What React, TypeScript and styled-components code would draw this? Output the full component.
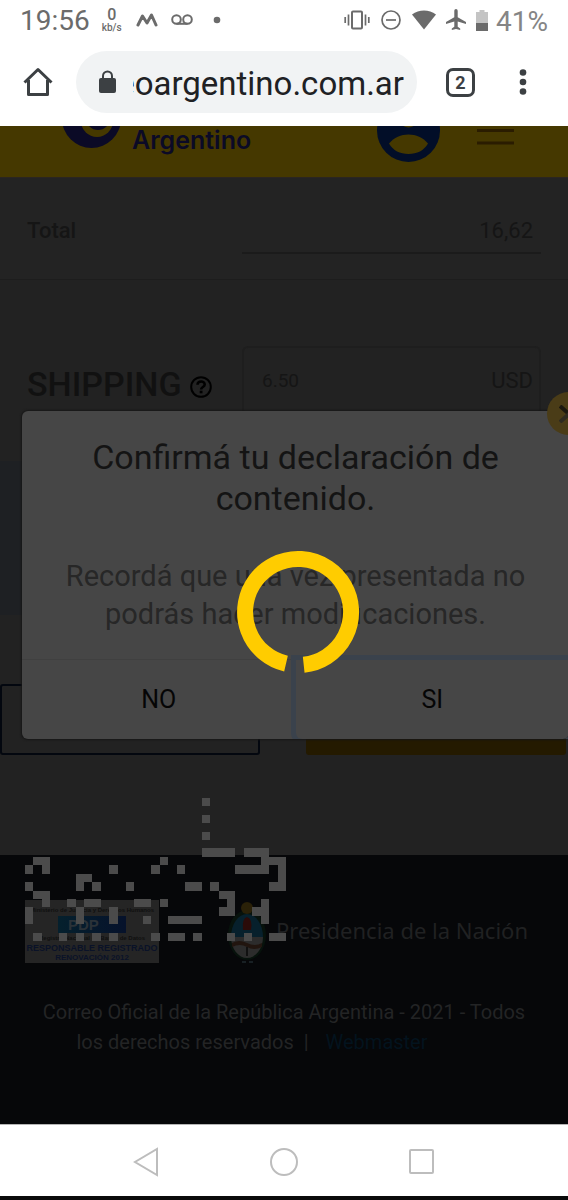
import React from "react";
import styled, { createGlobalStyle } from "styled-components";

const Global = createGlobalStyle`
  *, *::before, *::after { box-sizing: border-box; }
  body { margin: 0; background: #fff; font-family: Roboto, "Liberation Sans", sans-serif; }
  button, input { font: inherit; color: inherit; background: none; border: 0; padding: 0; margin: 0; outline: 0; }
  button { display: flex; align-items: center; justify-content: center; }
  svg { display: block; flex: none; }
  h1, p { margin: 0; }
`;

const Screen = styled.div`
  display: flex;
  flex-direction: column;
  min-height: 100vh;
`;

const StatusBar = styled.div`
  display: flex;
  align-items: center;
  height: 40px;
  padding: 0 20px;
  color: #6b6b6b;
  font-size: 28px;
`;

const Spacer = styled.div`
  flex: 1;
`;

const Clock = styled.time`
  line-height: 40px;
  padding-top: 2px;
`;

const Rate = styled.div`
  display: flex;
  flex-direction: column;
  align-items: center;
  margin-left: 12px;
  font-size: 10px;
  line-height: 10px;
  font-weight: 500;
`;

const RateValue = styled.span`
  font-size: 16px;
  line-height: 16px;
`;

const StatusIcons = styled.div<{ $gap: number }>`
  display: flex;
  align-items: center;
  gap: ${(p) => p.$gap}px;
  margin: 0 8px 0 14px;
`;

const Battery = styled.span`
  padding-top: 2px;
  color: #858585;
`;

const BrowserBar = styled.div`
  display: flex;
  align-items: center;
  height: 86px;
  padding: 0 29px 2px 22px;
  color: #3c4043;
`;

const BarButton = styled.button`
  width: 32px;
  height: 48px;
`;

const Address = styled.label`
  display: flex;
  align-items: center;
  flex: 1;
  min-width: 0;
  height: 62px;
  margin: 0 29px 0 22px;
  padding: 0 13px 0 22px;
  gap: 16px;
  border-radius: 31px;
  background: #f1f3f4;
`;

const AddressInput = styled.input`
  flex: 1;
  min-width: 0;
  height: 48px;
  padding-top: 2px;
  direction: rtl;
  color: #202124;
  font-size: 33px;
`;

const TabButton = styled.button`
  width: 29px;
  height: 29px;
  margin-right: 32px;
  border: 3px solid #3c4043;
  border-radius: 7px;
  font-size: 18px;
  font-weight: 700;
`;

const Page = styled.main`
  position: relative;
  flex: 1;
  display: flex;
  flex-direction: column;
  overflow: hidden;
  background: #222;
`;

const SiteHeader = styled.header`
  display: flex;
  align-items: flex-end;
  height: 52px;
  padding: 0 54px 0 62px;
  overflow: hidden;
  background: #453800;
  border-bottom: 1px solid #2b2520;
`;

const Emblem = styled.svg`
  margin-bottom: 29px;
`;

const Brand = styled.div`
  flex: 1;
  margin-left: 11px;
  padding-bottom: 25px;
  color: #0b0a26;
  font-family: Inter, "Liberation Sans", sans-serif;
  font-size: 25px;
  line-height: 24px;
  font-weight: 600;
`;

const AvatarButton = styled.button`
  margin: 0 37px 15px 0;
`;

const MenuButton = styled.button`
  margin-bottom: 32px;
`;

const FormRow = styled.div`
  display: grid;
  grid-template-columns: 215px minmax(0, 1fr);
  align-items: center;
  padding: 0 27px;
`;

const TotalSection = styled.section`
  height: 102px;
  padding-top: 30px;
  border-bottom: 1px solid #1d1d1d;
  background: #232323;
`;

const TotalLabel = styled.label`
  padding-bottom: 2px;
  color: #151515;
  font-size: 22px;
  font-weight: 500;
`;

const TotalInput = styled.input`
  width: 100%;
  height: 46px;
  padding: 0 8px;
  border-bottom: 2px solid #1b1b1b;
  color: #151515;
  font-size: 22px;
  text-align: right;
`;

const ShippingSection = styled.section`
  flex: 1;
  padding-top: 66px;
  background: #222;
`;

const ShippingLabel = styled.label`
  display: flex;
  align-items: center;
  gap: 8px;
  padding-top: 6px;
  color: #111;
  font-size: 34px;
  font-weight: 500;
`;

const HelpIcon = styled.svg`
  margin-top: 5px;
`;

const AmountBox = styled.div`
  display: flex;
  align-items: center;
  height: 70px;
  padding: 0 6px 2px 18px;
  border: 2px solid #1e1e1e;
  border-radius: 6px;
  color: #151515;
  font-size: 22px;
`;

const AmountInput = styled.input`
  flex: 1;
  min-width: 0;
  font-size: 19px;
`;

const Notice = styled.div`
  height: 154px;
  margin: 45px 0 69px;
  background: #1e2023;
`;

const Actions = styled.div`
  display: grid;
  grid-template-columns: 1fr 1fr;
  gap: 46px;
  margin-right: 2px;
`;

const PageButton = styled.button<{ $filled?: boolean }>`
  height: 71px;
  border-radius: 3px;
  border: 2px solid ${(p) => (p.$filled ? "#241a00" : "#03070f")};
  background: ${(p) => (p.$filled ? "#241a00" : "transparent")};
`;

const Footer = styled.footer`
  height: 269px;
  padding: 45px 25px 0;
  background: #060709;
`;

const Logos = styled.div`
  display: flex;
  align-items: flex-start;
`;

const Seal = styled.div`
  display: flex;
  flex-direction: column;
  align-items: center;
  width: 134px;
  height: 63px;
  padding-top: 5px;
  background: #252525;
  color: #101010;
  font-family: "Liberation Sans", sans-serif;
  font-size: 6px;
  line-height: 11px;
  font-weight: 700;
  white-space: nowrap;
`;

const SealMark = styled.span`
  width: 68px;
  height: 17px;
  padding-left: 10px;
  background: linear-gradient(90deg, #05202d, #06122b);
  color: #2b3238;
  font-size: 15px;
  line-height: 18px;
`;

const SealLine = styled.span<{ $size: number }>`
  color: #0a1228;
  font-size: ${(p) => p.$size}px;
  line-height: 9px;
`;

const Crest = styled.svg`
  margin: 1px 9px 0 68px;
`;

const Presidency = styled.span`
  padding-top: 14px;
  color: #202122;
  font-family: "Noto Sans", "Open Sans", sans-serif;
  font-size: 22px;
  line-height: 32px;
  white-space: nowrap;
`;

const Legal = styled.p`
  padding: 32px 10px 0;
  color: #232425;
  font-size: 20px;
  line-height: 30px;
  text-align: center;
`;

const LegalLink = styled.a`
  margin: 0 64px 0 12px;
  color: #03131e;
  text-decoration: none;
`;

const Pixels = styled.svg`
  position: absolute;
  left: 25px;
  bottom: 183px;
`;

const Dialog = styled.div`
  position: absolute;
  top: 285px;
  left: 22px;
  right: -1px;
  border-radius: 6px;
  background: #464646;
  box-shadow: 0 0 2px 1px #161616;
  text-align: center;
`;

const DialogTitle = styled.h1`
  padding: 26px 40px 0;
  color: #141414;
  font-size: 34px;
  line-height: 41px;
  font-weight: 400;
`;

const DialogText = styled.p`
  padding: 38px 40px 26px;
  color: #272727;
  font-size: 29px;
  line-height: 38px;
`;

const DialogActions = styled.div`
  display: grid;
  grid-template-columns: 1fr 1fr;
  border-top: 1px solid #404040;
`;

const DialogButton = styled.button<{ $focused?: boolean }>`
  height: 79px;
  color: #050505;
  font-size: 25px;
  border-radius: 0 0 6px 6px;
  box-shadow: ${(p) => (p.$focused ? "0 0 0 5px #3a424c" : "none")};
  clip-path: inset(-5px -5px 0 -5px);
`;

const CloseButton = styled.button`
  position: absolute;
  top: -19px;
  right: -21px;
  width: 43px;
  height: 43px;
  border-radius: 50%;
  background: #4a3c17;
`;

const Spinner = styled.svg`
  position: absolute;
  top: 139px;
  left: calc(50% - 60px);
`;

const NavBar = styled.nav`
  display: flex;
  align-items: center;
  justify-content: center;
  gap: 106px;
  height: 76px;
  padding-top: 2px;
  border-top: 1px solid #b5b5b5;
  border-bottom: 4px solid #0a0a0a;
  background: #fff;
`;

const NavButton = styled.button`
  width: 32px;
  height: 32px;
`;

/* Lit cells of the block pattern, one list of columns for each row. */
const pixelRows: number[][] = [
  [21],
  [],
  [21],
  [],
  [21],
  [],
  [21, 22, 23, 24, 26, 27, 28],
  [1, 2, 16, 28, 29, 30],
  [0, 2, 10, 15, 18, 25, 26, 27, 28, 30],
  [6, 7, 30],
  [0, 6, 8, 12, 19, 20, 22, 29, 30],
  [1, 2, 23, 24],
  [2, 5, 7, 8, 13, 14, 16, 24, 28],
  [0, 6, 10, 23, 24, 27, 28],
  [0, 6, 10, 14, 17, 18, 19, 20, 28],
  [],
  [1, 4, 6, 8, 10, 15, 17, 18, 20, 24, 26, 29, 30],
];

const pixelPath = pixelRows
  .map((cols, y) => cols.map((x) => `M${x} ${y}h1v1h-1z`).join(""))
  .join("");

function NotificationIcons() {
  return (
    <StatusIcons $gap={13} aria-hidden="true">
      <svg width="22" height="14" viewBox="0 0 22 14" fill="none" stroke="currentColor" strokeWidth="3" strokeLinecap="round" strokeLinejoin="round">
        <path d="M2 12 6.500 3l4.500 7 4.500-8L20 12" />
      </svg>
      <svg width="22" height="12" viewBox="0 0 22 12" fill="none" stroke="currentColor" strokeWidth="2">
        <circle cx="5.500" cy="5.500" r="4.300" />
        <circle cx="16.500" cy="5.500" r="4.300" />
        <path d="M5.500 9.800h11" />
      </svg>
      <svg width="22" height="8" viewBox="0 0 22 8" fill="currentColor">
        <circle cx="11" cy="4" r="3.300" />
      </svg>
    </StatusIcons>
  );
}

function SystemIcons() {
  return (
    <StatusIcons $gap={10} aria-hidden="true">
      <svg width="26" height="20" viewBox="0 0 26 20" fill="none" stroke="currentColor" strokeWidth="2">
        <rect x="8" y="1.500" width="10" height="17" rx="1" />
        <path d="M4.500 4.500v11M1.200 7v6M21.500 4.500v11M24.800 7v6" strokeWidth="1.700" />
      </svg>
      <svg width="22" height="20" viewBox="0 0 22 20" fill="none" stroke="currentColor" strokeWidth="1.700">
        <circle cx="11" cy="10" r="9" />
        <path d="M6 10h10" />
      </svg>
      <svg width="24" height="20" viewBox="0 0 24 20" fill="currentColor">
        <path d="M0 4.500C7-1 17-1 24 4.500L12 19.500z" />
      </svg>
      <svg width="20" height="22" viewBox="0 0 20 22" fill="currentColor">
        <path d="M10 0c1 0 1.700.9 1.700 2v6.200L20 13v2l-8.300-2.500v5.200l2.500 1.900V21L10 20l-4.200 1v-1.400l2.500-1.900v-5.200L0 15v-2l8.300-4.800V2C8.300.9 9 0 10 0z" />
      </svg>
      <svg width="12" height="21" viewBox="0 0 12 21">
        <path d="M3.500 0h5v2H12v19H0V2h3.500z" fill="#c4c4c4" />
        <path d="M0 13h12v8H0z" fill="currentColor" />
      </svg>
    </StatusIcons>
  );
}

export default function App() {
  return (
    <>
      <Global />
      <Screen>
        <StatusBar>
          <Clock>19:56</Clock>
          <Rate>
            <RateValue>0</RateValue>
            <span>kb/s</span>
          </Rate>
          <NotificationIcons />
          <Spacer />
          <SystemIcons />
          <Battery>41%</Battery>
        </StatusBar>

        <BrowserBar>
          <BarButton aria-label="Inicio">
            <svg width="30" height="30" viewBox="0 0 30 30" fill="none" stroke="currentColor" strokeWidth="3" strokeLinejoin="round">
              <path d="M1.500 15.500 15 2.500l13.500 13" />
              <path d="M5.500 13v14.500h19V13" />
            </svg>
          </BarButton>
          <Address>
            <svg width="19" height="24" viewBox="0 0 19 24" aria-hidden="true">
              <rect x="1" y="8" width="17" height="15" rx="2" fill="currentColor" />
              <path d="M5 9V6a4.500 4.500 0 0 1 9 0v3" fill="none" stroke="currentColor" strokeWidth="2" />
            </svg>
            <AddressInput aria-label="Dirección" readOnly value="correoargentino.com.ar" />
          </Address>
          <TabButton aria-label="Pestañas">2</TabButton>
          <BarButton aria-label="Más opciones">
            <svg width="8" height="28" viewBox="0 0 8 28" fill="currentColor">
              <circle cx="4" cy="4.500" r="3.300" />
              <circle cx="4" cy="14" r="3.300" />
              <circle cx="4" cy="23.500" r="3.300" />
            </svg>
          </BarButton>
        </BrowserBar>

        <Page>
          <SiteHeader>
            <Emblem width="59" height="59" viewBox="0 0 59 59" aria-hidden="true">
              <circle cx="29.500" cy="29.500" r="29.500" fill="#0b0a26" />
              <circle cx="35" cy="32" r="16" fill="#453800" />
              <circle cx="36" cy="29" r="12" fill="#0b0a26" />
            </Emblem>
            <Brand>
              Correo
              <br />
              Argentino
            </Brand>
            <AvatarButton aria-label="Mi cuenta">
              <svg width="63" height="63" viewBox="0 0 63 63">
                <circle cx="31.500" cy="31.500" r="31.500" fill="#020e28" />
                <circle cx="31.500" cy="19" r="9.500" fill="#453800" />
                <path d="M12 44.500c5-6 12-9 19.500-9S46 38.500 51 44.500c-4 7-11 10.500-19.500 10.500S16 51.500 12 44.500z" fill="#453800" />
              </svg>
            </AvatarButton>
            <MenuButton aria-label="Menú">
              <svg width="37" height="29" viewBox="0 0 37 29" stroke="#2a1c00" strokeWidth="3">
                <path d="M0 2h37M0 14.500h37M0 27h37" />
              </svg>
            </MenuButton>
          </SiteHeader>

          <TotalSection>
            <FormRow>
              <TotalLabel htmlFor="total">Total</TotalLabel>
              <TotalInput id="total" readOnly value="16,62" />
            </FormRow>
          </TotalSection>

          <ShippingSection>
            <FormRow>
              <ShippingLabel htmlFor="shipping">
                SHIPPING
                <HelpIcon width="22" height="22" viewBox="0 0 22 22" fill="none" stroke="#000" aria-hidden="true">
                  <circle cx="11" cy="11" r="9.800" strokeWidth="2" />
                  <path d="M7.500 8.700c.2-4.200 7.200-4.200 7.200-.3 0 2.600-3.600 2.500-3.600 5" strokeWidth="2.600" />
                  <path d="M9.700 16h2.800" strokeWidth="2.600" />
                </HelpIcon>
              </ShippingLabel>
              <AmountBox>
                <AmountInput id="shipping" readOnly value="6.50" />
                <span>USD</span>
              </AmountBox>
            </FormRow>
            <Notice />
            <Actions>
              <PageButton aria-label="Volver" />
              <PageButton $filled aria-label="Continuar" />
            </Actions>
          </ShippingSection>

          <Footer>
            <Logos>
              <Seal>
                <span>Ministerio de Justicia y Derechos Humanos</span>
                <SealMark>PDP</SealMark>
                <span>Registro Nacional de Bases de Datos</span>
                <SealLine $size={9}>RESPONSABLE REGISTRADO</SealLine>
                <SealLine $size={8}>RENOVACIÓN 2012</SealLine>
              </Seal>
              <Crest width="40" height="64" viewBox="0 0 40 64" aria-hidden="true">
                <ellipse cx="20" cy="34" rx="19" ry="25" fill="#07120c" />
                <circle cx="20" cy="7" r="6" fill="#2a2108" />
                <path d="M4 36a16 23 0 0 1 32 0z" fill="#07202c" />
                <path d="M4 36h32a16 21 0 0 1-32 0z" fill="#2c2c2c" />
                <path d="M16 29q-1-12 4-13 6 2 4 13z" fill="#2b0b09" />
                <path d="M5 42q7-4 15 0t15 0v4q-8 4-15 0t-15 0z" fill="#21150f" />
                <path d="M20 46v9" stroke="#111" strokeWidth="2" />
                <path d="M15 61h4M22 61h4" stroke="#182024" strokeWidth="2" />
              </Crest>
              <Presidency>Presidencia de la Nación</Presidency>
            </Logos>
            <Legal>
              Correo Oficial de la República Argentina - 2021 - Todos los derechos reservados &nbsp;|{" "}
              <LegalLink href="#webmaster">Webmaster</LegalLink>
            </Legal>
          </Footer>

          <Pixels width="261" height="143" viewBox="0 0 31 17" preserveAspectRatio="none" shapeRendering="crispEdges" aria-hidden="true">
            <path d={pixelPath} fill="#4b4b4b" />
          </Pixels>

          <Dialog role="dialog" aria-labelledby="dialog-title">
            <DialogTitle id="dialog-title">Confirmá tu declaración de contenido.</DialogTitle>
            <DialogText>Recordá que una vez presentada no podrás hacer modificaciones.</DialogText>
            <DialogActions>
              <DialogButton>NO</DialogButton>
              <DialogButton $focused>SI</DialogButton>
            </DialogActions>
            <CloseButton aria-label="Cerrar">
              <svg width="20" height="18" viewBox="0 0 20 18" fill="none" strokeWidth="4">
                <path d="M1 1l9 8 9-8" stroke="#1b1810" />
                <path d="M1 17l9-8 9 8" stroke="#2e2a20" />
              </svg>
            </CloseButton>
            <Spinner width="124" height="124" viewBox="0 0 124 124" role="img" aria-label="Cargando">
              <path d="M50 113.600A53 53 0 1 1 67.700 114.700" fill="none" stroke="#fc0" strokeWidth="16" />
            </Spinner>
          </Dialog>
        </Page>

        <NavBar>
          <NavButton aria-label="Atrás">
            <svg width="28" height="30" viewBox="0 0 28 30" fill="none" stroke="#bdbdbd" strokeWidth="2">
              <path d="M25 2v26L3 15z" />
            </svg>
          </NavButton>
          <NavButton aria-label="Inicio del teléfono">
            <svg width="28" height="28" viewBox="0 0 28 28" fill="none" stroke="#bdbdbd" strokeWidth="2">
              <circle cx="14" cy="14" r="13" />
            </svg>
          </NavButton>
          <NavButton aria-label="Recientes">
            <svg width="26" height="26" viewBox="0 0 26 26" fill="none" stroke="#bdbdbd" strokeWidth="2">
              <rect x="1" y="1" width="23" height="23" rx="1" />
            </svg>
          </NavButton>
        </NavBar>
      </Screen>
    </>
  );
}
